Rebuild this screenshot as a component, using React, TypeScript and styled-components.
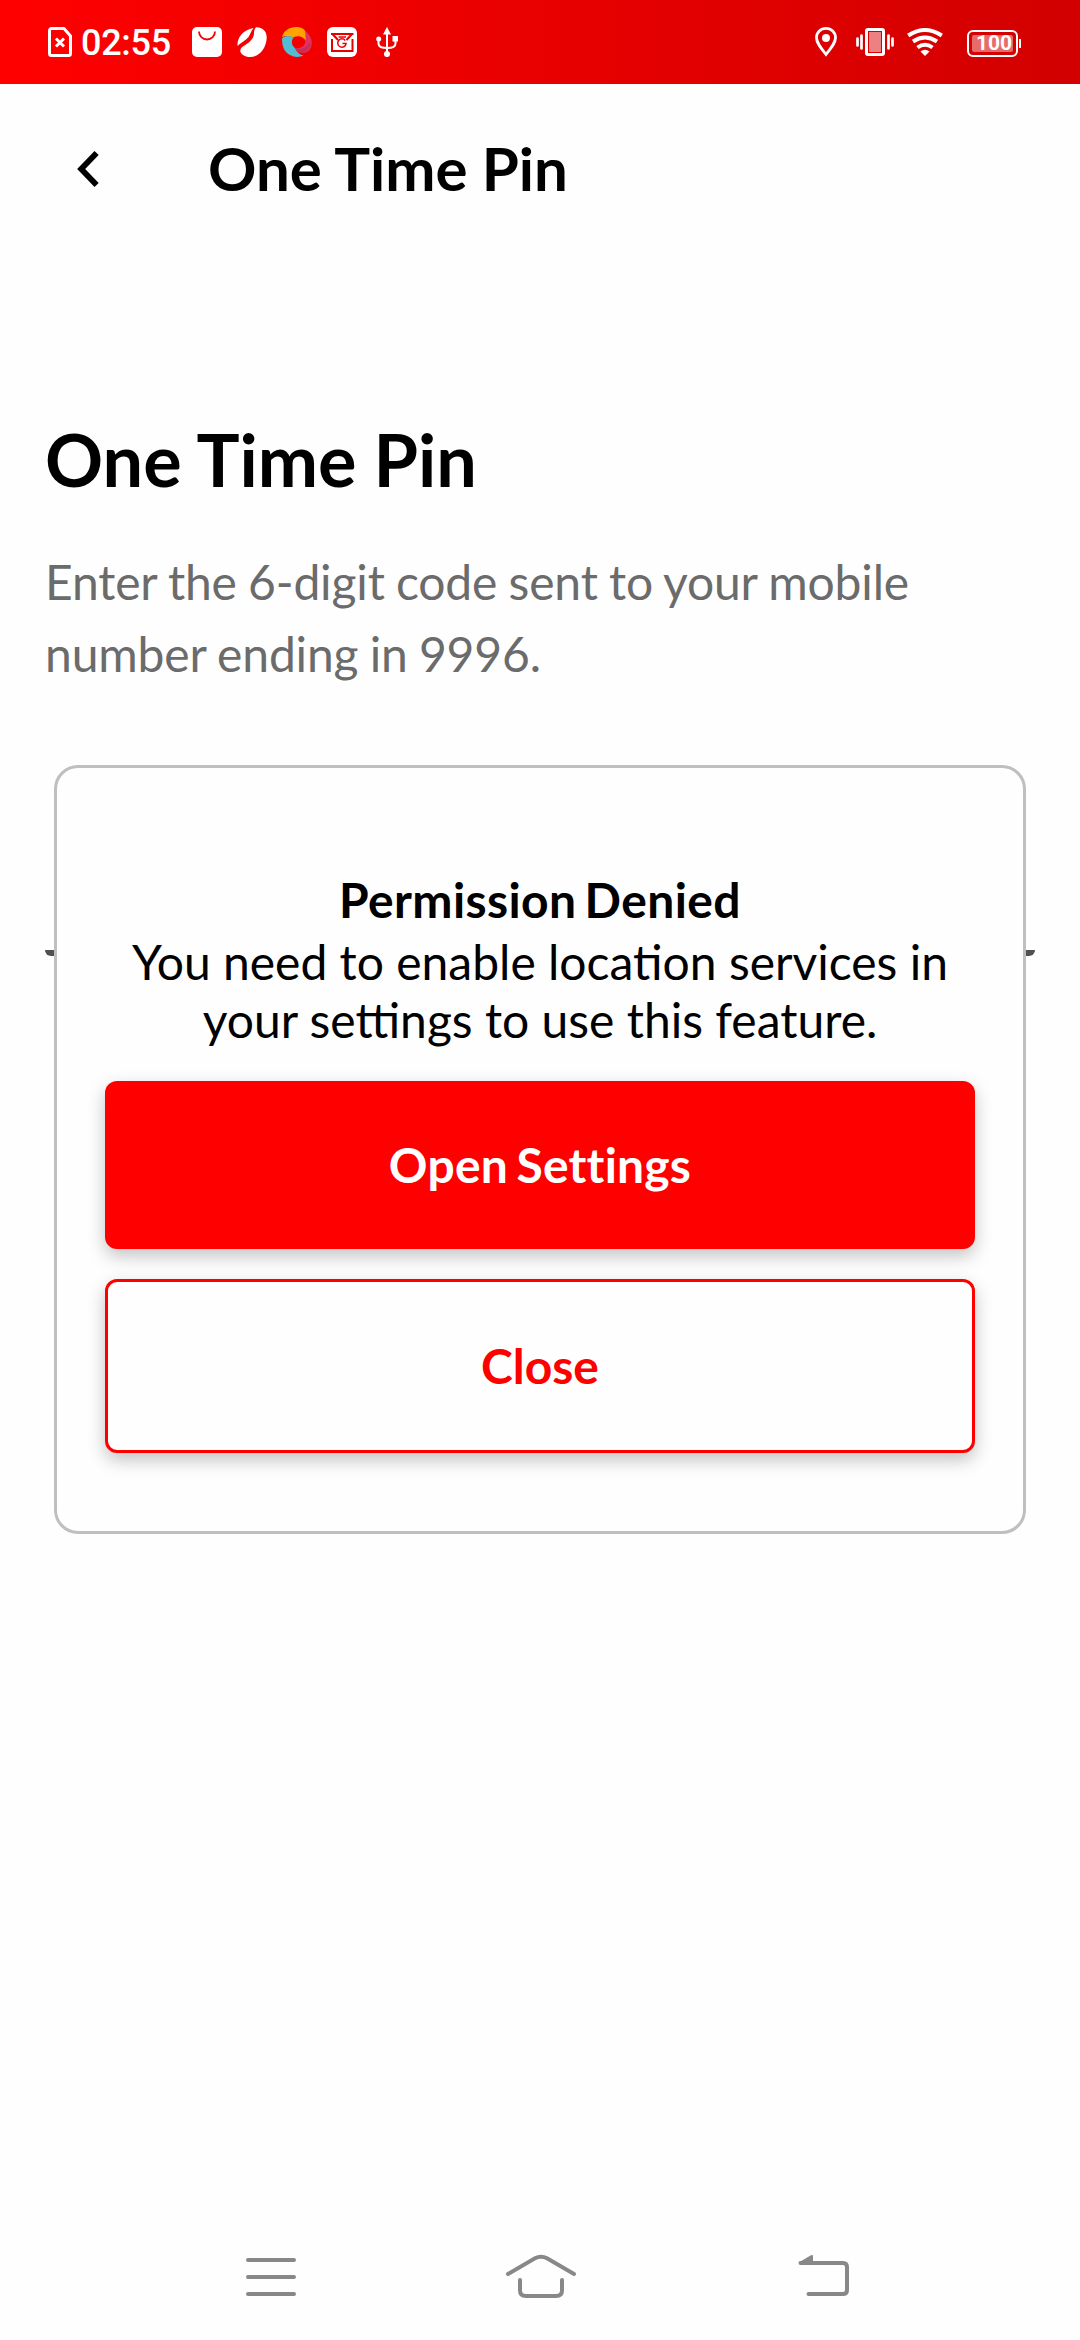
import React from "react";
import styled, { createGlobalStyle } from "styled-components";

const GlobalStyle = createGlobalStyle`
  *, *::before, *::after { box-sizing: border-box; }
  body {
    margin: 0;
    background: #fefefe;
    font-family: Lato, "Liberation Sans", sans-serif;
    color: #000;
  }
`;

const Screen = styled.div`
  position: relative;
  display: flex;
  flex-direction: column;
  width: 1080px;
  height: 2340px;
  overflow: hidden;
  background: #fefefe;
`;

const StatusBar = styled.header`
  display: flex;
  justify-content: space-between;
  align-items: center;
  height: 84px;
  padding: 0 59px 0 48px;
  color: #fff;
  background: linear-gradient(90deg, #ff0000, #d20000);
`;

const StatusGroup = styled.div`
  display: flex;
  align-items: center;
`;

const Glyph = styled.svg<{ $w: number; $h: number; $ml?: number }>`
  display: block;
  flex: none;
  width: ${(p) => p.$w}px;
  height: ${(p) => p.$h}px;
  margin-left: ${(p) => p.$ml ?? 0}px;
`;

const Clock = styled.span`
  width: 96px;
  margin-left: 9px;
  padding-top: 2px;
  font: 500 36px/42px Roboto, sans-serif;
  letter-spacing: -0.3px;
`;

const Battery = styled.div`
  display: flex;
  align-items: center;
  margin: 3px 0 0 24px;
`;

const BatteryCase = styled.div`
  width: 51px;
  height: 27px;
  padding: 3px;
  border: 2px solid #fff;
  border-radius: 6px;
`;

const BatteryLevel = styled.div`
  display: flex;
  justify-content: center;
  align-items: center;
  height: 17px;
  padding-left: 3px;
  border-radius: 2px;
  background: rgba(255, 255, 255, 0.42);
  font: 700 21px/17px Roboto, sans-serif;
`;

const BatteryTip = styled.div`
  width: 2px;
  height: 9px;
  margin-left: 1px;
  background: #fff;
`;

const TitleBar = styled.nav`
  display: flex;
  align-items: center;
  height: 168px;
  padding: 0 77px;
`;

const BackButton = styled.button`
  width: 131px;
  padding: 2px 0 0;
  border: 0;
  background: none;
`;

const BarTitle = styled.h2`
  margin: 0;
  font-size: 60px;
  line-height: 72px;
  font-weight: 700;
  word-spacing: -0.4px;
`;

const Content = styled.main`
  display: flex;
  flex-direction: column;
  flex: 1;
  padding: 164px 45px 0;
`;

const Heading = styled.h1`
  margin: 0;
  font-size: 72px;
  line-height: 87px;
  font-weight: 700;
  word-spacing: -0.4px;
`;

const Lead = styled.p`
  margin: 43px 0 0;
  font-size: 48px;
  line-height: 72px;
  letter-spacing: -0.15px;
  word-spacing: -0.9px;
  color: #6b6b6b;
`;

const PinUnderline = styled.div`
  height: 6px;
  margin-top: 260px;
  border-radius: 0 0 6px 6px;
  background: #505050;
`;

const Dialog = styled.section`
  position: absolute;
  top: 765px;
  left: 54px;
  display: flex;
  flex-direction: column;
  width: 972px;
  height: 769px;
  padding: 103px 48px 0;
  border: 3px solid #bfbfbf;
  border-radius: 24px;
  background: #fefefe;
`;

const DialogTitle = styled.h3`
  margin: 0;
  font-size: 48px;
  line-height: 58px;
  font-weight: 700;
  letter-spacing: 0.4px;
  word-spacing: -4px;
  text-align: center;
`;

const DialogText = styled.p`
  margin: 4px 0 33px;
  font-size: 48px;
  line-height: 57.5px;
  text-align: center;
`;

const ActionButton = styled.button<{ $primary?: boolean }>`
  display: flex;
  align-items: center;
  justify-content: center;
  height: ${(p) => (p.$primary ? 168 : 174)}px;
  margin: 0 0 30px;
  padding: 0;
  border: ${(p) => (p.$primary ? "0" : "3px solid #ff0000")};
  border-radius: 12px;
  background: ${(p) => (p.$primary ? "#ff0000" : "#fefefe")};
  color: ${(p) => (p.$primary ? "#fff" : "#ff0000")};
  font: 700 48px/58px Lato, "Liberation Sans", sans-serif;
  font-variant-ligatures: none;
  letter-spacing: ${(p) => (p.$primary ? 0.2 : 0)}px;
  word-spacing: -3.4px;
  box-shadow: 0 7px 18px rgba(0, 0, 0, 0.24);
`;

const SystemNav = styled.footer`
  display: flex;
  align-items: flex-start;
  height: 86px;
  padding: 0 0 0 246px;
`;

export default function App() {
  return (
    <>
      <GlobalStyle />
      <Screen>
        <StatusBar>
          <StatusGroup>
            <Glyph $w={24} $h={30} viewBox="0 0 24 30" fill="none" stroke="#fff">
              <path d="M3.500 1.500H16L22.500 9V26.500a2 2 0 0 1-2 2h-17a2 2 0 0 1-2-2v-23a2 2 0 0 1 2-2Z" strokeWidth="3" strokeLinejoin="round" />
              <path d="M8 11.500l8 8M16 11.500l-8 8" strokeWidth="3" />
            </Glyph>
            <Clock>02:55</Clock>
            <Glyph $w={30} $h={30} $ml={15} viewBox="0 0 30 30">
              <rect width="30" height="30" rx="5" fill="#fff" />
              <path d="M7 4.500a8 8 0 0 0 16 0" fill="none" stroke="#f40000" strokeWidth="1.800" />
            </Glyph>
            <Glyph $w={30} $h={30} $ml={15} viewBox="0 0 30 30" fill="#fff">
              <path d="M16.500 1C6 3 0 10 .5 19c3-3 8-5.500 11-9 2-3 2.500-6 5-9Z" />
              <path d="M19 .3C25 0 30 4 29.700 11 29 22 22 30 13 30c-4 0-8-1.500-9.500-5-.8-3 1-5 4-6.500C15 14 17 10 17 6c0-2 .5-4 2-5.700Z" />
            </Glyph>
            <Glyph $w={30} $h={30} $ml={15} viewBox="0 0 30 30">
              <path d="M0 10C2 3 9-1 17 .3c3 .5 5.500 2.200 6.500 4.200L24 14C21 9 16 8 11 10.500 7 8.500 3 8.500 0 10Z" fill="#ffa400" />
              <path d="M23.500 4.500C30 9 32 18 27 23.500c-4 4-10 3-14-2.500 6 1 10-2 10.500-7 .5-3 .5-6 0-9.500Z" fill="#e3325f" />
              <path d="M0 11.500c3-3 7-3 11.500-1C9 14 9.500 18.500 13 21c2 4 4 6.500 8.500 7.500C18 30.500 12 30.500 8 28 2 25 0 19 0 11.500Z" fill="#52bcd4" />
              <path d="M13 21c5 2 11 .5 15.500-6 .5 7-6 12-11 10.500-2-.8-3.500-2.500-4.500-4.500Z" fill="#c92d59" />
            </Glyph>
            <Glyph $w={30} $h={30} $ml={15} viewBox="0 0 30 30" fill="none" stroke="#e60000">
              <rect width="30" height="30" rx="6" fill="#fff" stroke="none" />
              <path d="M5 12v12h20.500V12M4 7h22.500M5.500 7l5.500 6M25 7l-5.500 6" strokeWidth="2" />
              <path d="M11.500 10h7.500" strokeWidth="1.500" />
              <path d="M18.300 13.500a4.200 4.200 0 1 0 .8 3H15.500" strokeWidth="1.500" />
            </Glyph>
            <Glyph $w={22} $h={30} $ml={19} viewBox="0 0 22 30" fill="none" stroke="#fff" strokeWidth="2">
              <path d="M11 4v22M2.500 13v3.500q0 4.500 8.500 4.500 8.500 0 8.500-4.500V12" />
              <path d="M7 7.500 11 0l4 7.500Z" fill="#fff" stroke="none" />
              <circle cx="11" cy="27" r="3" fill="#fff" stroke="none" />
              <circle cx="2.700" cy="12" r="2.500" fill="#fff" stroke="none" />
              <rect x="16.500" y="9" width="5.500" height="5.500" fill="#fff" stroke="none" />
            </Glyph>
          </StatusGroup>
          <StatusGroup>
            <Glyph $w={22} $h={30} viewBox="0 0 22 30">
              <path d="M11 27.500C5 20 1.500 15.500 1.500 10.700a9.500 9.300 0 0 1 19 0C20.500 15.500 17 20 11 27.500Z" fill="none" stroke="#fff" strokeWidth="2.800" />
              <circle cx="11" cy="11" r="4" fill="#fff" />
            </Glyph>
            <Glyph $w={38} $h={28} $ml={19} viewBox="0 0 38 28">
              <rect x="10.500" y="1.500" width="17" height="25" rx="1.500" fill="none" stroke="#fff" strokeWidth="3" />
              <rect x="13" y="4" width="12" height="20" fill="#fff" fillOpacity=".5" />
              <path d="M1.500 10.500v7M5.500 7.500v13M32.500 7.500v13M36.500 10.500v7" stroke="#fff" strokeWidth="2.700" strokeLinecap="round" />
            </Glyph>
            <Glyph $w={36} $h={28} $ml={13} viewBox="0 0 36 28" fill="none" stroke="#fff" strokeWidth="4">
              <path d="M1.200 7.500Q18-3.500 34.800 7.500M6 13.500Q18 5.500 30 13.500M10.500 19.500Q18 14 25.500 19.500" />
              <path d="M13.500 23.500q4.500-3.500 9 0L18 28Z" fill="#fff" stroke="none" />
            </Glyph>
            <Battery>
              <BatteryCase>
                <BatteryLevel>100</BatteryLevel>
              </BatteryCase>
              <BatteryTip />
            </Battery>
          </StatusGroup>
        </StatusBar>

        <TitleBar>
          <BackButton aria-label="Back">
            <Glyph $w={22} $h={36} viewBox="0 0 22 36" fill="none" stroke="#000" strokeWidth="5.800">
              <path d="M19.600 2.100 4.200 18l15.400 15.900" />
            </Glyph>
          </BackButton>
          <BarTitle>One Time Pin</BarTitle>
        </TitleBar>

        <Content>
          <Heading>One Time Pin</Heading>
          <Lead>
            Enter the 6-digit code sent to your mobile
            <br />
            number ending in 9996.
          </Lead>
          <PinUnderline />
        </Content>

        <SystemNav>
          <Glyph $w={50} $h={46} viewBox="0 0 50 46" stroke="#888" strokeWidth="4" strokeLinecap="round">
            <path d="M2 6h46M2 23h46M2 40h46" />
          </Glyph>
          <Glyph $w={72} $h={46} $ml={209} viewBox="0 0 72 46" fill="none" stroke="#888" strokeWidth="4" strokeLinecap="round">
            <path d="M3 20 30 4.300q6-3.200 12 0L69 20" />
            <path d="M15 26v10.500q0 5.500 6 5.500h30q6 0 6-5.500V26" />
          </Glyph>
          <Glyph $w={52} $h={46} $ml={221} viewBox="0 0 52 46" fill="none" stroke="#888" strokeWidth="4" strokeLinecap="round">
            <path d="M2.500 9h42.500q4 0 4 4v23q0 4-4 4H10.500" />
            <path d="M.7 8.500 13 1.300q2-.8 2 .7v8H2Z" fill="#888" stroke="none" />
          </Glyph>
        </SystemNav>

        <Dialog role="dialog">
          <DialogTitle>Permission Denied</DialogTitle>
          <DialogText>
            You need to enable location services in
            <br />
            your settings to use this feature.
          </DialogText>
          <ActionButton $primary>Open Settings</ActionButton>
          <ActionButton>Close</ActionButton>
        </Dialog>
      </Screen>
    </>
  );
}
